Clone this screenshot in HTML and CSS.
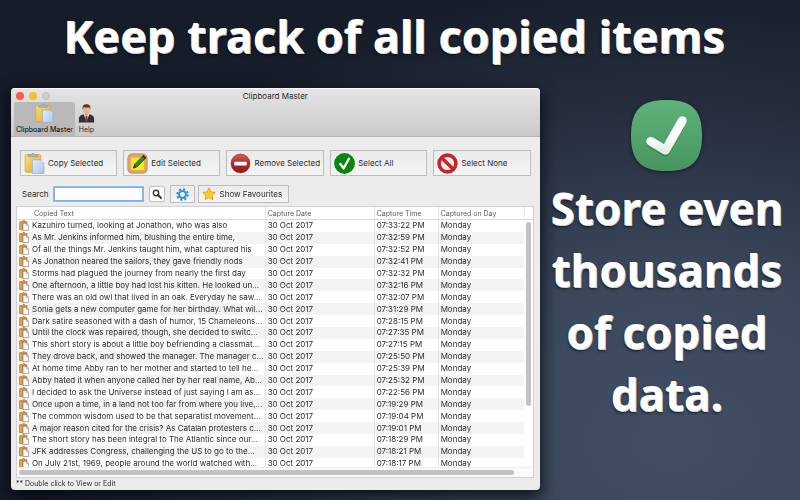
FILE: index.html
```html
<!DOCTYPE html>
<html lang="en">
<head>
    <meta charset="UTF-8">
    <meta name="viewport" content="width=device-width, initial-scale=1.0">
    <title>Clipboard Master</title>
    <link rel="stylesheet" href="styles.css">
</head>
<body>

    <!-- Shared icon shapes -->
    <svg class="defs" aria-hidden="true">
        <defs>
            <linearGradient id="gold" x1="0" y1="0" x2="1" y2="1">
                <stop offset="0" stop-color="#fbe27a"/><stop offset="1" stop-color="#dfa822"/>
            </linearGradient>
            <linearGradient id="paper" x1="0" y1="0" x2="1" y2="1">
                <stop offset="0" stop-color="#e4eefb"/><stop offset="1" stop-color="#a9c6ea"/>
            </linearGradient>
            <linearGradient id="red" x1="0" y1="0" x2="0" y2="1">
                <stop offset="0" stop-color="#d0605a"/><stop offset="0.5" stop-color="#b5262a"/><stop offset="1" stop-color="#8c1a1c"/>
            </linearGradient>
            <linearGradient id="green" x1="0" y1="0" x2="0" y2="1">
                <stop offset="0" stop-color="#5fb27b"/><stop offset="1" stop-color="#479560"/>
            </linearGradient>
            <linearGradient id="tick" x1="0" y1="0" x2="0" y2="1">
                <stop offset="0.6" stop-color="#ffffff"/><stop offset="1" stop-color="#dceee2"/>
            </linearGradient>
            <symbol id="clipboard" viewBox="0 0 20 20">
                <rect x="1" y="1.500" width="15" height="17" rx="1.500" fill="url(#gold)" stroke="#d0a030" stroke-width=".6"/>
                <path d="M4 3.500V1.700h2.600a2 2 0 0 1 3.800 0H13v1.800z" fill="#a9b9c6" stroke="#7d8e9b" stroke-width=".5"/>
                <path d="M8 6.500h8l3 3v10H8z" fill="url(#paper)" stroke="#8ba9d2" stroke-width=".6"/>
                <path d="M16 6.500v3h3z" fill="#f5f9ff" stroke="#8ba9d2" stroke-width=".4"/>
            </symbol>
            <symbol id="clip-small" viewBox="0 0 10 11">
                <path d="M1.200 1.500h2L4 .5h1.500l.8 1H8v8.300H1.200a.9.900 0 0 1-.9-.9V2.400a.9.900 0 0 1 .9-.9z" fill="#cf8f3d" stroke="#a9691f" stroke-width=".5"/>
                <path d="M2 2.500v6.500" stroke="#eec27b" stroke-width=".8"/>
                <path d="M4 3.300h3.600l2 2v5.300H4z" fill="#fff" stroke="#77706a" stroke-width=".6"/>
                <path d="M7.500 3.300v2.100h2" fill="none" stroke="#77706a" stroke-width=".5"/>
            </symbol>
        </defs>
    </svg>

    <h1 class="headline">Keep track of all copied items</h1>

    <main class="showcase">
        <section class="window">
            <header class="titlebar">
                <div class="title-row">
                    <div class="lights">
                        <span class="light close"></span>
                        <span class="light minimise"></span>
                        <span class="light zoom"></span>
                    </div>
                    <div class="title">Clipboard Master</div>
                </div>
                <nav class="tabs">
                    <button class="tab active" type="button">
                        <svg class="tab-icon"><use href="#clipboard"/></svg>
                        Clipboard Master
                    </button>
                    <button class="tab" type="button">
                        <svg class="tab-icon" viewBox="0 0 20 20">
                            <path d="M2 19.500v-4c0-2.500 2-4 5-4.700h6c3 .7 5 2.200 5 4.700v4z" fill="#2c3038"/>
                            <path d="M7 10.500 10 19l3-8.500z" fill="#f3f3f5"/>
                            <path d="M9.200 12h1.600l.7 4.500L10 19l-1.500-2.500z" fill="#b3222b"/>
                            <path d="M8 8h4v3.500l-2 1.500-2-1.500z" fill="#d89b7c"/>
                            <ellipse cx="10" cy="5.800" rx="3.700" ry="4.700" fill="#e8b292"/>
                            <path d="M6 6C5.300 2 7 .3 10 .3S14.700 2 14 6l-.8-2.700c-2 .6-4.400.5-6.200-.2z" fill="#5b3327"/>
                        </svg>
                        Help
                    </button>
                </nav>
            </header>

            <div class="actions">
                <button class="action" type="button">
                    <svg class="action-icon"><use href="#clipboard"/></svg>
                    Copy Selected
                </button>
                <button class="action" type="button">
                    <svg class="action-icon" viewBox="0 0 20 20">
                        <rect x=".3" y=".3" width="19.400" height="19.400" rx="5" fill="#d49164"/>
                        <rect x="1.500" y="1.500" width="17" height="17" rx="4" fill="#e0a77e"/>
                        <path d="M3.500 4h13v12.500H3.500z" fill="#fbe625" stroke="#c9a71c" stroke-width=".5"/>
                        <path d="m6 14.500 1.200-3.900 8.300-8.300 2.500 2.500-8.300 8.400z" fill="#2b8c2e" stroke="#17521b" stroke-width=".6"/>
                        <path d="m6 14.500.9-3 2 2z" fill="#2b2416"/>
                        <path d="m14.500 3.300 1.400-1.400 2.500 2.500L17 5.800z" fill="#3a2a28"/>
                    </svg>
                    Edit Selected
                </button>
                <button class="action" type="button">
                    <svg class="action-icon" viewBox="0 0 20 20">
                        <circle cx="10" cy="10" r="9" fill="url(#red)" stroke="#8e2a28" stroke-width=".6"/>
                        <rect x="4" y="8.400" width="12" height="3.400" rx=".6" fill="#fff"/>
                    </svg>
                    Remove Selected
                </button>
                <button class="action" type="button">
                    <svg class="action-icon" viewBox="0 0 20 20">
                        <circle cx="10" cy="10" r="9.900" fill="#0b850f"/>
                        <path d="m6 10.500 3.200 4 5-9" fill="none" stroke="#fff" stroke-width="2.200" stroke-linecap="round" stroke-linejoin="round"/>
                    </svg>
                    Select All
                </button>
                <button class="action" type="button">
                    <svg class="action-icon" viewBox="0 0 20 20">
                        <circle cx="10" cy="10" r="8" fill="#f3eeee" stroke="#c3272b" stroke-width="3.400"/>
                        <path d="m4.500 4.500 11 11" stroke="#c3272b" stroke-width="3.200"/>
                    </svg>
                    Select None
                </button>
            </div>

            <form class="search-row">
                <label for="search">Search</label>
                <input class="search-box" id="search" type="text" autofocus>
                <button class="search-btn" type="button" aria-label="Search">
                    <svg viewBox="0 0 10 10"><circle cx="4" cy="4" r="2.700" fill="none" stroke="#333" stroke-width="1.400"/><path d="m6 6 3 3" stroke="#333" stroke-width="1.800" stroke-linecap="round"/></svg>
                </button>
                <button class="tool gear" type="button" aria-label="Settings">
                    <svg viewBox="0 0 12 12">
                        <circle cx="6" cy="6" r="4.900" fill="none" stroke="#2f8fdc" stroke-width="1.800" stroke-dasharray="1.920 1.920"/>
                        <circle cx="6" cy="6" r="3.200" fill="none" stroke="#2f8fdc" stroke-width="1.800"/>
                    </svg>
                </button>
                <button class="tool" type="button">
                    <svg viewBox="0 0 14 14"><path d="m7 .8 1.900 4 4.400.6-3.200 3.100.8 4.400L7 10.800l-3.900 2.100.8-4.400L.7 5.400l4.400-.6z" fill="#fbcb2f" stroke="#dc9c1e" stroke-width=".8" stroke-linejoin="round"/></svg>
                    Show Favourites
                </button>
            </form>

            <div class="list">
                <div class="list-view">
                    <table class="clips">
                        <colgroup>
                            <col class="col-icon"><col><col class="col-date"><col class="col-time"><col class="col-day"><col class="col-scroll">
                        </colgroup>
                        <thead>
                            <tr><th></th><th>Copied Text</th><th>Capture Date</th><th>Capture Time</th><th>Captured on Day</th><th></th></tr>
                        </thead>
                        <tbody>
                            <tr><td><svg><use href="#clip-small"/></svg></td><td>Kazuhiro turned, looking at Jonathon, who was also</td><td>30 Oct 2017</td><td>07:33:22 PM</td><td>Monday</td></tr>
                            <tr><td><svg><use href="#clip-small"/></svg></td><td>As Mr. Jenkins informed him, blushing the entire time,</td><td>30 Oct 2017</td><td>07:32:59 PM</td><td>Monday</td></tr>
                            <tr><td><svg><use href="#clip-small"/></svg></td><td>Of all the things Mr. Jenkins taught him, what captured his</td><td>30 Oct 2017</td><td>07:32:52 PM</td><td>Monday</td></tr>
                            <tr><td><svg><use href="#clip-small"/></svg></td><td>As Jonathon neared the sailors, they gave friendly nods</td><td>30 Oct 2017</td><td>07:32:41 PM</td><td>Monday</td></tr>
                            <tr><td><svg><use href="#clip-small"/></svg></td><td>Storms had plagued the journey from nearly the first day</td><td>30 Oct 2017</td><td>07:32:32 PM</td><td>Monday</td></tr>
                            <tr><td><svg><use href="#clip-small"/></svg></td><td>One afternoon, a little boy had lost his kitten. He looked un...</td><td>30 Oct 2017</td><td>07:32:16 PM</td><td>Monday</td></tr>
                            <tr><td><svg><use href="#clip-small"/></svg></td><td>There was an old owl that lived in an oak. Everyday he saw...</td><td>30 Oct 2017</td><td>07:32:07 PM</td><td>Monday</td></tr>
                            <tr><td><svg><use href="#clip-small"/></svg></td><td>Sonia gets a new computer game for her birthday. What wil...</td><td>30 Oct 2017</td><td>07:31:29 PM</td><td>Monday</td></tr>
                            <tr><td><svg><use href="#clip-small"/></svg></td><td>Dark satire seasoned with a dash of humor, 15 Chameleons...</td><td>30 Oct 2017</td><td>07:28:15 PM</td><td>Monday</td></tr>
                            <tr><td><svg><use href="#clip-small"/></svg></td><td>Until the clock was repaired, though, she decided to switc...</td><td>30 Oct 2017</td><td>07:27:35 PM</td><td>Monday</td></tr>
                            <tr><td><svg><use href="#clip-small"/></svg></td><td>This short story is about a little boy befriending a classmat...</td><td>30 Oct 2017</td><td>07:27:15 PM</td><td>Monday</td></tr>
                            <tr><td><svg><use href="#clip-small"/></svg></td><td>They drove back, and showed the manager. The manager c...</td><td>30 Oct 2017</td><td>07:25:50 PM</td><td>Monday</td></tr>
                            <tr><td><svg><use href="#clip-small"/></svg></td><td>At home time Abby ran to her mother and started to tell he...</td><td>30 Oct 2017</td><td>07:25:39 PM</td><td>Monday</td></tr>
                            <tr><td><svg><use href="#clip-small"/></svg></td><td>Abby hated it when anyone called her by her real name, Ab...</td><td>30 Oct 2017</td><td>07:25:32 PM</td><td>Monday</td></tr>
                            <tr><td><svg><use href="#clip-small"/></svg></td><td>I decided to ask the Universe instead of just saying I am as...</td><td>30 Oct 2017</td><td>07:22:56 PM</td><td>Monday</td></tr>
                            <tr><td><svg><use href="#clip-small"/></svg></td><td>Once upon a time, in a land not too far from where you live,...</td><td>30 Oct 2017</td><td>07:19:29 PM</td><td>Monday</td></tr>
                            <tr><td><svg><use href="#clip-small"/></svg></td><td>The common wisdom used to be that separatist movement...</td><td>30 Oct 2017</td><td>07:19:04 PM</td><td>Monday</td></tr>
                            <tr><td><svg><use href="#clip-small"/></svg></td><td>A major reason cited for the crisis? As Catalan protesters c...</td><td>30 Oct 2017</td><td>07:19:01 PM</td><td>Monday</td></tr>
                            <tr><td><svg><use href="#clip-small"/></svg></td><td>The short story has been integral to The Atlantic since our...</td><td>30 Oct 2017</td><td>07:18:29 PM</td><td>Monday</td></tr>
                            <tr><td><svg><use href="#clip-small"/></svg></td><td>JFK addresses Congress, challenging the US to go to the...</td><td>30 Oct 2017</td><td>07:18:21 PM</td><td>Monday</td></tr>
                            <tr><td><svg><use href="#clip-small"/></svg></td><td>On July 21st, 1969, people around the world watched with...</td><td>30 Oct 2017</td><td>07:18:17 PM</td><td>Monday</td></tr>
                        </tbody>
                    </table>
                    <div class="scroll-v"></div>
                </div>
                <div class="scroll-h"><div class="thumb"></div></div>
            </div>

            <p class="hint">** Double click to View or Edit</p>
        </section>

        <aside class="pitch">
            <svg class="badge" viewBox="0 0 72 72">
                <path d="M36 0C62 0 72 10 72 36S62 72 36 72 0 62 0 36 10 0 36 0z" fill="url(#green)"/>
                <path d="m20 44 15 9 17-31" fill="none" stroke="#2f7245" stroke-opacity=".5" stroke-width="9" stroke-linecap="round" stroke-linejoin="round"/>
                <path d="m20 42 15 9 17-30" fill="none" stroke="url(#tick)" stroke-width="9" stroke-linecap="round" stroke-linejoin="round"/>
            </svg>
            <h2 class="pitch-text">Store even thousands of copied data.</h2>
        </aside>
    </main>

</body>
</html>
```
FILE: styles.css
```css
* {
    box-sizing: border-box;
}

body {
    margin: 0;
    min-height: 100vh;
    background: radial-gradient(ellipse 80% 95% at 84% 88%, #414d62 0%, #3b475b 35%, #262e3e 70%, #161c28 100%);
    color: #fff;
    font-family: Inter, "Liberation Sans", sans-serif;
    overflow: hidden;
}

.defs {
    position: absolute;
    width: 0;
    height: 0;
}

button,
input {
    font: inherit;
    color: inherit;
}

.headline,
.pitch-text {
    margin: 0;
    font-family: "Noto Sans", "Open Sans", sans-serif;
    font-weight: 700;
    text-align: center;
    text-shadow: 1px 1px 0 #cdd0d8, 0 2px 3px rgba(0, 0, 0, 0.6);
}

.headline {
    padding: 6px 12px 22px 0;
    font-size: 45px;
    line-height: 60px;
}

.showcase {
    display: grid;
    grid-template-columns: 67% 1fr;
    align-items: start;
    padding-left: 11px;
}

/* App window */
.window {
    border-radius: 4px;
    background: #ececec;
    color: #2b2b2b;
    font-size: 8px;
    line-height: 12px;
    overflow: hidden;
    box-shadow: 0 6px 16px 2px rgba(5, 8, 16, 0.8);
}

.titlebar {
    border-top: 1px solid #f8f8f8;
    border-bottom: 1px solid #b4b4b4;
    background: linear-gradient(#e4e4e4, #cacaca);
}

.title-row {
    display: grid;
    grid-template-columns: 60px 1fr 60px;
    align-items: center;
    height: 13px;
}

.lights {
    display: flex;
    gap: 5px;
    padding-left: 5px;
}

.light {
    width: 8px;
    height: 8px;
    border-radius: 50%;
}

.close {
    background: #f75a50;
}

.minimise {
    background: #f8bc33;
}

.zoom {
    border: 1px solid #bcbcbc;
    background: #cfcfcf;
}

.title {
    text-align: center;
}

.tabs {
    display: flex;
    padding-left: 3px;
}

.tab {
    display: flex;
    flex-direction: column;
    align-items: center;
    gap: 2px;
    padding: 2px 2px 1px;
    border: 0;
    border-radius: 3px 3px 0 0;
    background: none;
    font-size: 7px;
    line-height: 10px;
    white-space: nowrap;
}

.tab.active {
    background: #b9b9b9;
    color: #000;
}

.tab-icon {
    width: 19px;
    height: 19px;
}

.actions {
    display: grid;
    grid-template-columns: repeat(5, 1fr);
    gap: 6px;
    padding: 13px 9px 0;
}

.action,
.tool {
    display: flex;
    align-items: center;
    border: 1px solid #bdbdbd;
    background: linear-gradient(#ebebeb, #f5f5f5);
    white-space: nowrap;
}

.action {
    gap: 3px;
    height: 26px;
    padding: 0 3px;
}

.action-icon {
    flex: none;
    width: 21px;
    height: 21px;
}

.search-row {
    display: flex;
    align-items: center;
    padding: 9px 11px 3px;
}

.search-box {
    width: 89px;
    height: 14px;
    margin: 0 7px 0 5px;
    padding: 0 2px;
    border: 1px solid #7fb0ea;
    background: #fff;
    outline: 1px solid #8dbbf0;
}

.search-btn {
    display: flex;
    width: 14px;
    height: 14px;
    margin-right: 6px;
    padding: 2px;
    border: 0;
    border-radius: 2px;
    background: #fff;
    box-shadow: 0 0 1px 1px rgba(0, 0, 0, 0.2);
}

.tool {
    gap: 4px;
    height: 18px;
    margin-right: 3px;
    padding: 0 6px 0 3px;
}

.tool svg {
    width: 14px;
    height: 14px;
}

.gear {
    padding: 0 5px;
}

.gear svg {
    width: 13px;
    height: 13px;
}

/* Clip list */
.list {
    margin: 0 6px 0 5px;
    border: 1px solid #d2d2d2;
    background: #fff;
}

.list-view {
    position: relative;
    max-height: 260px;
    overflow: hidden;
}

.clips {
    width: 100%;
    height: 263px;
    table-layout: fixed;
    border-collapse: separate;
    border-spacing: 0;
    line-height: 11px;
}

.col-icon {
    width: 15px;
}

.col-date {
    width: 109px;
}

.col-time {
    width: 64px;
}

.col-day {
    width: 86px;
}

.col-scroll {
    width: 9px;
}

.clips th,
.clips td {
    padding: 0 0 0 2px;
    text-align: left;
    white-space: nowrap;
    overflow: hidden;
}

.clips th {
    height: 13px;
    border-bottom: 1px solid #d9d9d9;
    color: #5a5a5a;
    font-size: 7px;
    font-weight: 400;
}

.clips td {
    background: #fff;
}

.clips td:nth-child(2) {
    padding-left: 0;
}

.clips tr:nth-child(even) td {
    background: #f3f3f3;
}

.clips th:nth-child(n+3),
.clips td:nth-child(n+3) {
    border-left: 1px solid #e4e4e4;
}

.clips td svg {
    display: block;
    width: 10px;
    height: 11px;
}

/* Scrollbars lie over the right edge of the rows */
.scroll-v {
    position: absolute;
    top: 15px;
    right: 2px;
    width: 5px;
    height: 184px;
    border-radius: 3px;
    background: #c2c2c2;
}

.scroll-h {
    padding: 2px 19px 2px 2px;
    border-top: 1px solid #ededed;
    background: #fafafa;
}

.thumb {
    height: 5px;
    border-radius: 3px;
    background: #c2c2c2;
}

.hint {
    margin: 0;
    padding: 0 5px;
    font-size: 7px;
}

/* Right hand side */
.pitch {
    display: flex;
    flex-direction: column;
    align-items: center;
    padding: 12px 6px 0 0;
}

.badge {
    width: 71px;
    height: 71px;
    filter: drop-shadow(0 1px 2px rgba(0, 0, 0, 0.5));
}

.pitch-text {
    max-width: 250px;
    padding-top: 6px;
    font-size: 44px;
    line-height: 62px;
}
```
